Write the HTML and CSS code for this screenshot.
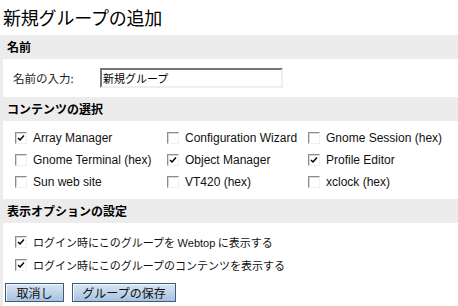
FILE: index.html
```html
<!DOCTYPE html>
<html lang="ja">
<head>
<meta charset="utf-8">
<link rel="stylesheet" href="styles.css">
</head>
<body>
<div class="page">
  <h1 class="title">新規グループの追加</h1>

  <div class="bar">名前</div>
  <div class="section name-row">
    <span class="label">名前の入力:</span>
    <span class="input">新規グループ</span>
  </div>

  <div class="bar">コンテンツの選択</div>
  <div class="section grid">
    <div class="item"><span class="cb on"><svg viewBox="0 0 8 8"><path d="M1 4 L3 6 L7 1.5" /></svg></span><span class="txt">Array Manager</span></div>
    <div class="item"><span class="cb"></span><span class="txt">Configuration Wizard</span></div>
    <div class="item"><span class="cb"></span><span class="txt">Gnome Session (hex)</span></div>
    <div class="item"><span class="cb"></span><span class="txt">Gnome Terminal (hex)</span></div>
    <div class="item"><span class="cb on"><svg viewBox="0 0 8 8"><path d="M1 4 L3 6 L7 1.5" /></svg></span><span class="txt">Object Manager</span></div>
    <div class="item"><span class="cb on"><svg viewBox="0 0 8 8"><path d="M1 4 L3 6 L7 1.5" /></svg></span><span class="txt">Profile Editor</span></div>
    <div class="item"><span class="cb"></span><span class="txt">Sun web site</span></div>
    <div class="item"><span class="cb"></span><span class="txt">VT420 (hex)</span></div>
    <div class="item"><span class="cb"></span><span class="txt">xclock (hex)</span></div>
  </div>

  <div class="bar">表示オプションの設定</div>
  <div class="section options">
    <div class="item"><span class="cb on"><svg viewBox="0 0 8 8"><path d="M1 4 L3 6 L7 1.5" /></svg></span><span class="txt jp">ログイン時にこのグループを <span class="latin">Webtop</span> に表示する</span></div>
    <div class="item"><span class="cb on"><svg viewBox="0 0 8 8"><path d="M1 4 L3 6 L7 1.5" /></svg></span><span class="txt jp">ログイン時にこのグループのコンテンツを表示する</span></div>
    <div class="buttons">
      <button class="btn b1">取消し</button>
      <button class="btn b2">グループの保存</button>
    </div>
  </div>
</div>
</body>
</html>
```

FILE: styles.css
```css
html, body {
  margin: 0;
  padding: 0;
  background: #ffffff;
}
body {
  font-family: "Liberation Sans", "Noto Sans CJK JP", sans-serif;
  font-size: 12px;
  color: #000;
  width: 458px;
  height: 306px;
  overflow: hidden;
}
.page {
  display: flex;
  flex-direction: column;
}
.title {
  margin: 0;
  height: 35px;
  line-height: 35px;
  font-size: 18px;
  font-weight: normal;
  padding-left: 3px;
  font-family: "Noto Sans CJK JP", sans-serif;
  letter-spacing: -0.2px;
}
.bar {
  height: 24px;
  line-height: 24px;
  background: #ececec;
  font-weight: bold;
  padding-left: 7px;
  font-family: "Noto Sans CJK JP", sans-serif;
  font-size: 12px;
}
.section {
  border-left: 3px solid #ececec;
  background: #fff;
}
.name-row {
  height: 38px;
  display: flex;
  align-items: center;
  padding-left: 10px;
}
.label {
  width: 87px;
  font-family: "Noto Sans CJK JP", sans-serif;
  font-size: 11.5px;
  color: #222;
}
.input {
  box-sizing: border-box;
  width: 183px;
  height: 20px;
  border-style: solid;
  border-width: 2px;
  border-color: #767676 #eeeeee #eeeeee #767676;
  font-family: "Noto Sans CJK JP", sans-serif;
  font-size: 11px;
  line-height: 16px;
  padding-left: 1px;
}
.grid {
  display: grid;
  grid-template-columns: 152px 141px auto;
  grid-auto-rows: 22px;
  padding: 6px 0 6px 12px;
}
.item {
  display: flex;
  align-items: center;
}
.cb {
  box-sizing: border-box;
  width: 12px;
  height: 12px;
  border: 1px solid;
  border-color: #8c8c8c #f0f0f0 #f0f0f0 #8c8c8c;
  box-shadow: inset 1px 1px 0 #d8d8d8;
  background: #fff;
  margin-right: 6px;
  display: flex;
  align-items: center;
  justify-content: center;
  flex: none;
}
.cb svg {
  width: 8px;
  height: 8px;
}
.cb svg path {
  fill: none;
  stroke: #000;
  stroke-width: 1.5;
}
.txt {
  color: #111;
  white-space: nowrap;
}
.txt.jp {
  font-family: "Noto Sans CJK JP", sans-serif;
  font-size: 11px;
}
.latin {
  font-family: "Liberation Sans", sans-serif;
  font-size: 11px;
}
.options {
  padding: 7px 0 4px 12px;
  display: flex;
  flex-direction: column;
}
.options .item {
  height: 23px;
}
.buttons {
  display: flex;
  gap: 8px;
  margin-top: 7px;
  margin-left: -10px;
}
.btn {
  box-sizing: border-box;
  height: 19px;
  border: 1px solid #3d5a80;
  background: linear-gradient(#d9e6f3, #a7c2de);
  box-shadow: inset 1px 1px 0 #f4f8fc;
  font-family: "Noto Sans CJK JP", sans-serif;
  font-size: 12px;
  color: #111;
  padding: 0;
  line-height: 16px;
}
.b1 { width: 59px; }
.b2 { width: 104px; }
```
